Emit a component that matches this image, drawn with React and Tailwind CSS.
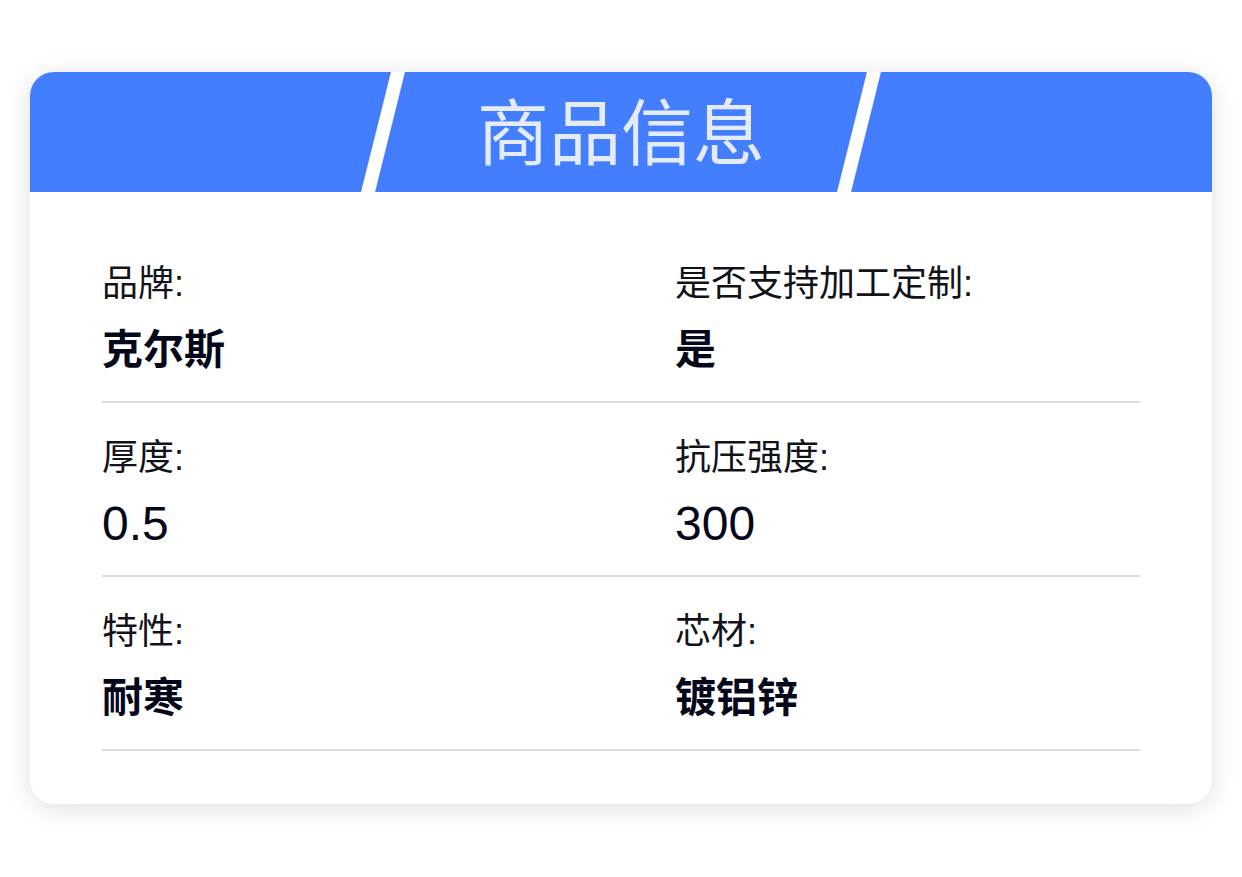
export default function App() {
  const rows = [
    [
      { label: "品牌:", value: "克尔斯", num: false },
      { label: "是否支持加工定制:", value: "是", num: false },
    ],
    [
      { label: "厚度:", value: "0.5", num: true },
      { label: "抗压强度:", value: "300", num: true },
    ],
    [
      { label: "特性:", value: "耐寒", num: false },
      { label: "芯材:", value: "镀铝锌", num: false },
    ],
  ];
  const font = { fontFamily: '"Liberation Sans", "Noto Sans CJK SC", sans-serif' };
  return (
    <div className="w-[1242px] h-[877px] bg-white pt-[72px] px-[30px]" style={font}>
      <div className="rounded-[24px] bg-white overflow-hidden shadow-[0_4px_26px_rgba(0,0,0,0.13)]">
        <div className="relative h-[120px] bg-[#437EFF] flex items-center justify-center pb-[8px]">
          <div className="absolute top-0 left-[346px] w-[14px] h-[120px] bg-white -skew-x-[14deg]" />
          <div className="absolute top-0 left-[822px] w-[14px] h-[120px] bg-white -skew-x-[14deg]" />
          <span
            className="relative text-[72px] leading-none text-[#E3EBFD] font-normal"
            style={{ fontFamily: '"Noto Sans CJK SC", sans-serif' }}
          >
            商品信息
          </span>
        </div>
        <div className="px-[72px] pt-[37px] pb-[53px]">
          {rows.map((row, i) => (
            <div
              key={i}
              className="grid grid-cols-[573px_1fr] border-b-2 border-[#DCDCE0] pt-[35px] pb-[27px]"
            >
              {row.map((item, j) => (
                <div key={j} className="flex flex-col">
                  <div className="h-[40px] leading-[40px] text-[36px] text-[#12131a] whitespace-nowrap">
                    {item.label}
                  </div>
                  <div
                    className={`mt-[22px] h-[48px] leading-[48px] text-[#05071a] ${
                      item.num ? "text-[48px] font-normal" : "text-[41px] font-bold"
                    }`}
                  >
                    {item.value}
                  </div>
                </div>
              ))}
            </div>
          ))}
        </div>
      </div>
    </div>
  );
}
